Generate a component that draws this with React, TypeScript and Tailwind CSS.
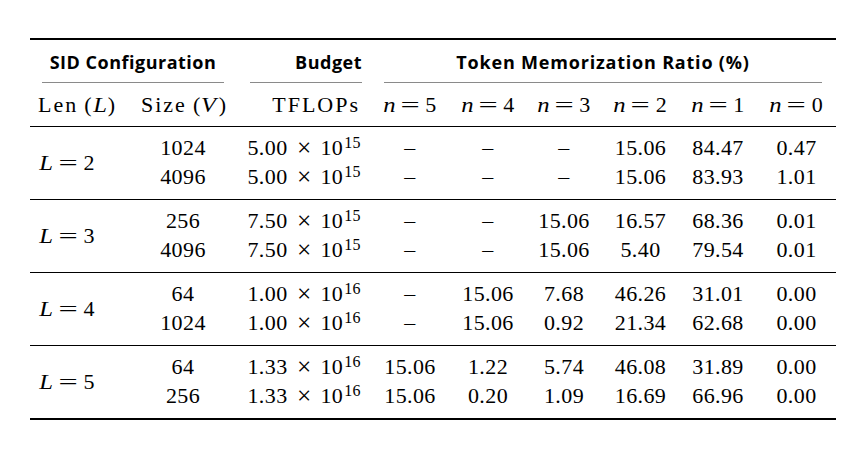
import React from "react";

const serif = { fontFamily: '"Liberation Serif", "Times New Roman", serif' };
const sans = { fontFamily: '"Open Sans", Inter, sans-serif' };

const cols = "grid grid-cols-[100px_106px_134px_80px_76px_76px_77px_78px_79px]";
const valCols = ["col-start-4", "col-start-5", "col-start-6", "col-start-7", "col-start-8", "col-start-9"];
const rowStarts = ["row-start-1", "row-start-2"];

function Eq({ v, n }: { v: string; n: string }) {
  return (
    <span className="whitespace-nowrap">
      <i className="inline-block scale-x-[1.12]">{v}</i>
      <span className="inline-block mx-[9px] scale-x-[1.55]">=</span>
      {n}
    </span>
  );
}

function Sci({ m, e }: { m: string; e: string }) {
  return (
    <span className="whitespace-nowrap tracking-[0.4px]">
      {m}
      <span className="inline-block mx-[10px] scale-[1.15]">×</span>
      10
      <span className="text-[16px] relative top-[-7px] ml-[1px]">{e}</span>
    </span>
  );
}

type Row = { size: string; budget: [string, string]; vals: string[] };
type Group = { L: string; rows: Row[] };

const groups: Group[] = [
  {
    L: "2",
    rows: [
      { size: "1024", budget: ["5.00", "15"], vals: ["–", "–", "–", "15.06", "84.47", "0.47"] },
      { size: "4096", budget: ["5.00", "15"], vals: ["–", "–", "–", "15.06", "83.93", "1.01"] },
    ],
  },
  {
    L: "3",
    rows: [
      { size: "256", budget: ["7.50", "15"], vals: ["–", "–", "15.06", "16.57", "68.36", "0.01"] },
      { size: "4096", budget: ["7.50", "15"], vals: ["–", "–", "15.06", "5.40", "79.54", "0.01"] },
    ],
  },
  {
    L: "4",
    rows: [
      { size: "64", budget: ["1.00", "16"], vals: ["–", "15.06", "7.68", "46.26", "31.01", "0.00"] },
      { size: "1024", budget: ["1.00", "16"], vals: ["–", "15.06", "0.92", "21.34", "62.68", "0.00"] },
    ],
  },
  {
    L: "5",
    rows: [
      { size: "64", budget: ["1.33", "16"], vals: ["15.06", "1.22", "5.74", "46.08", "31.89", "0.00"] },
      { size: "256", budget: ["1.33", "16"], vals: ["15.06", "0.20", "1.09", "16.69", "66.96", "0.00"] },
    ],
  },
];

export default function App() {
  return (
    <div className="w-[856px] h-[452px] bg-white pt-[38px] pl-[30px] text-black" style={serif}>
      <div className="w-[806px] text-[22px]">
        <div className="h-[2px] bg-black" />
        {/* header row 1 */}
        <div className={cols}>
          <div className="col-span-2 flex flex-col">
            <div className="h-[42px] pt-[3px] flex items-center justify-center font-bold text-[18px] tracking-[0.5px]" style={sans}>
              SID Configuration
            </div>
            <div className="h-px bg-[#8a8a8a] ml-[12px] mr-[12px]" />
          </div>
          <div className="flex flex-col">
            <div className="h-[42px] pt-[3px] flex items-center justify-end pr-[8px] font-bold text-[18px] tracking-[0.5px]" style={sans}>
              Budget
            </div>
            <div className="h-px bg-[#8a8a8a] ml-[14px] mr-[8px]" />
          </div>
          <div className="col-span-6 flex flex-col">
            <div className="h-[42px] pt-[3px] flex items-center justify-center font-bold text-[18px] tracking-[0.8px]" style={sans}>
              Token Memorization Ratio (%)
            </div>
            <div className="h-px bg-[#8a8a8a] ml-[14px] mr-[14px]" />
          </div>
        </div>
        {/* header row 2 */}
        <div className={`${cols} h-[43px] items-center leading-none`}>
          <div className="pl-[8px] whitespace-nowrap">
            <span className="tracking-[2px]">Len</span>
            <span className="ml-[6px] tracking-[2px]">(</span>
            <i className="inline-block scale-x-[1.12] pr-[2px]">L</i>)
          </div>
          <div className="text-right whitespace-nowrap pr-[10px]">
            <span className="tracking-[2px]">Size</span>
            <span className="ml-[6px] tracking-[2px]">(</span>
            <i className="inline-block scale-x-[1.12] pr-[3px]">V</i>)
          </div>
          <div className="text-right pr-[10px] tracking-[2px]">TFLOPs</div>
          {["5", "4", "3", "2", "1", "0"].map((n) => (
            <div key={n} className="text-center">
              <Eq v="n" n={n} />
            </div>
          ))}
        </div>
        <div className="h-px bg-black" />
        {groups.map((g, gi) => (
          <React.Fragment key={g.L}>
            <div className={`${cols} pt-[6px] pb-[8px] tracking-[0.4px]`}>
              <div className="col-start-1 row-start-1 row-span-2 flex items-center pl-[10px]">
                <Eq v="L" n={g.L} />
              </div>
              {g.rows.map((r, ri) => (
                <React.Fragment key={ri}>
                  <div className={`col-start-2 ${rowStarts[ri]} h-[29px] leading-[29px] text-center`}>{r.size}</div>
                  <div className={`col-start-3 ${rowStarts[ri]} h-[29px] leading-[29px] text-right pr-[9px]`}>
                    <Sci m={r.budget[0]} e={r.budget[1]} />
                  </div>
                  {r.vals.map((v, vi) => (
                    <div key={vi} className={`${valCols[vi]} ${rowStarts[ri]} h-[29px] leading-[29px] text-center`}>
                      {v}
                    </div>
                  ))}
                </React.Fragment>
              ))}
            </div>
            <div className={gi === groups.length - 1 ? "h-[2px] bg-black" : "h-px bg-black"} />
          </React.Fragment>
        ))}
      </div>
    </div>
  );
}
